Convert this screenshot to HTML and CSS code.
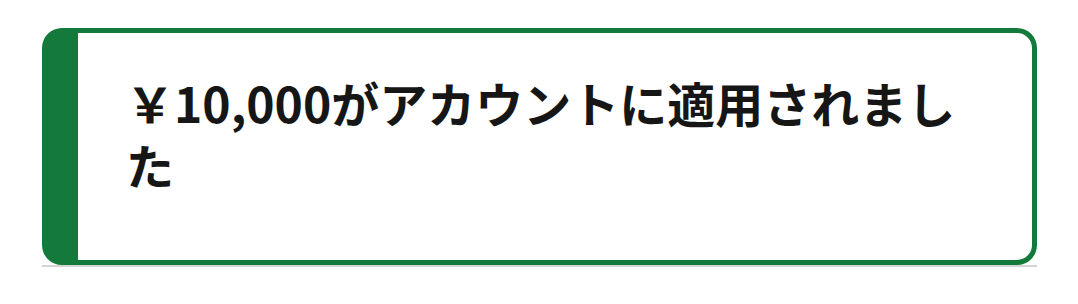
FILE: index.html
```html
<!DOCTYPE html>
<html lang="ja">
<head>
<meta charset="utf-8">
<link rel="stylesheet" href="styles.css">
</head>
<body>
<div class="page">
  <div class="notice-wrap">
    <div class="notice">
      <p class="notice-text">￥10,000がアカウントに適用されました</p>
    </div>
  </div>
</div>
</body>
</html>
```
FILE: styles.css
```css
html, body {
  margin: 0;
  padding: 0;
  background: #ffffff;
}
.page {
  padding: 28px 41px 0 42px;
}
.notice-wrap {
  border-bottom: 2px solid #d4d4d4;
}
.notice {
  border: 5px solid #137a3c;
  border-left-width: 36px;
  border-radius: 20px;
  padding: 38px 40px 65px 48px;
  background: #ffffff;
}
.notice-text {
  margin: 0;
  font-family: "Noto Sans CJK JP", "Noto Sans", sans-serif;
  font-weight: 700;
  font-size: 48px;
  line-height: 62px;
  color: #161616;
}
```
